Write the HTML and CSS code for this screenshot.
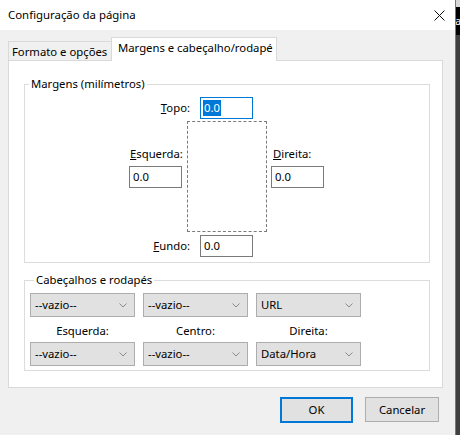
FILE: index.html
```html
<!DOCTYPE html>
<html lang="pt">
<head>
<meta charset="utf-8">
<title>Configuração da página</title>
<link rel="stylesheet" href="styles.css">
</head>
<body>
<div class="screen">
  <div class="dialog">
    <div class="titlebar">
      <span class="title">Configuração da página</span>
      <svg class="close" width="11" height="11" viewBox="0 0 11 11"><path d="M0.5 0.5 L10.5 10.5 M10.5 0.5 L0.5 10.5" stroke="#111" stroke-width="1" fill="none"/></svg>
    </div>
    <div class="tabs">
      <div class="tab">Formato e opções</div>
      <div class="tab active">Margens e cabeçalho/rodapé</div>
    </div>
    <div class="panel">
      <fieldset class="group margins">
        <legend>Margens (milímetros)</legend>
        <div class="vrow">
          <label class="vlabel"><u>T</u>opo:</label>
          <div class="field focus"><span class="sel">0.0</span></div>
        </div>
        <div class="midrow">
          <div class="side">
            <label class="slabel left"><u>E</u>squerda:</label>
            <div class="field">0.0</div>
          </div>
          <div class="page"></div>
          <div class="side">
            <label class="slabel right"><u>D</u>ireita:</label>
            <div class="field">0.0</div>
          </div>
        </div>
        <div class="vrow bottom">
          <label class="vlabel"><u>F</u>undo:</label>
          <div class="field">0.0</div>
        </div>
      </fieldset>
      <fieldset class="group headers">
        <legend>Cabeçalhos e rodapés</legend>
        <div class="combos">
          <div class="combo">--vazio--<svg class="chev" width="8" height="5" viewBox="0 0 8 5"><path d="M0.5 0.5 L4 4 L7.5 0.5" stroke="#8a8a8a" fill="none"/></svg></div>
          <div class="combo">--vazio--<svg class="chev" width="8" height="5" viewBox="0 0 8 5"><path d="M0.5 0.5 L4 4 L7.5 0.5" stroke="#8a8a8a" fill="none"/></svg></div>
          <div class="combo">URL<svg class="chev" width="8" height="5" viewBox="0 0 8 5"><path d="M0.5 0.5 L4 4 L7.5 0.5" stroke="#8a8a8a" fill="none"/></svg></div>
          <div class="clabel">Esquerda:</div>
          <div class="clabel">Centro:</div>
          <div class="clabel">Direita:</div>
          <div class="combo">--vazio--<svg class="chev" width="8" height="5" viewBox="0 0 8 5"><path d="M0.5 0.5 L4 4 L7.5 0.5" stroke="#8a8a8a" fill="none"/></svg></div>
          <div class="combo">--vazio--<svg class="chev" width="8" height="5" viewBox="0 0 8 5"><path d="M0.5 0.5 L4 4 L7.5 0.5" stroke="#8a8a8a" fill="none"/></svg></div>
          <div class="combo">Data/Hora<svg class="chev" width="8" height="5" viewBox="0 0 8 5"><path d="M0.5 0.5 L4 4 L7.5 0.5" stroke="#8a8a8a" fill="none"/></svg></div>
        </div>
      </fieldset>
    </div>
    <div class="buttons">
      <div class="btn default">OK</div>
      <div class="btn">Cancelar</div>
    </div>
  </div>
  <div class="edge">
    <div class="edge-top"></div>
    <div class="edge-bar">a</div>
    <div class="edge-rest"></div>
  </div>
</div>
</body>
</html>
```

FILE: styles.css
```css
html, body {
  margin: 0;
  padding: 0;
}
body {
  width: 460px;
  height: 435px;
  overflow: hidden;
  font-family: "Noto Sans", "Open Sans", sans-serif;
  font-size: 11.3px;
  color: #000;
  background: #f0f0f0;
}
.screen {
  display: flex;
  width: 460px;
  height: 435px;
}
.dialog {
  width: 455px;
  height: 435px;
  background: #f0f0f0;
  flex: none;
}
.titlebar {
  height: 30px;
  background: #fff;
  display: flex;
  align-items: center;
  justify-content: space-between;
  padding: 0 10px 0 8px;
  font-size: 11.4px;
}
.title {
  line-height: 16px;
}
.close {
  display: block;
}
.tabs {
  display: flex;
  align-items: flex-end;
  margin: 7px 0 0 8px;
  height: 23px;
}
.tab {
  height: 19px;
  line-height: 19px;
  padding: 0 0 0 3px;
  border: 1px solid #d9d9d9;
  border-bottom: none;
  border-right: none;
  background: #f0f0f0;
  box-sizing: border-box;
  width: 103px;
  white-space: nowrap;
  overflow: hidden;
}
.tab.active {
  height: 24px;
  line-height: 20px;
  width: 166px;
  border-right: 1px solid #d9d9d9;
  background: #fff;
  padding: 0 0 0 6px;
  margin-bottom: -1px;
  position: relative;
  z-index: 1;
}
.panel {
  margin-left: 8px;
  width: 435px;
  height: 328px;
  box-sizing: border-box;
  border: 1px solid #d9d9d9;
  background: #fff;
  padding: 15px 0 0 15px;
}
.group {
  margin: 0;
  width: 406px;
  box-sizing: border-box;
  border: 1px solid #dcdcdc;
  padding: 5px 0 5px 0;
}
.group legend {
  padding: 0 2px;
  margin-left: 4px;
  line-height: 16px;
}
.headers {
  margin-top: 9px;
  padding: 5px 0 4px 5px;
}
.vrow {
  display: flex;
  height: 22px;
  align-items: center;
}
.vrow.bottom {
  margin-top: 3px;
}
.vlabel {
  width: 165px;
  text-align: right;
  margin-right: 10px;
  line-height: 16px;
}
.field {
  width: 53px;
  height: 22px;
  box-sizing: border-box;
  border: 1px solid #7a7a7a;
  background: #fff;
  padding: 0 0 0 3px;
  line-height: 20px;
}
.field.focus {
  border-color: #0078d7;
  padding-left: 2px;
}
.sel {
  background: #0078d7;
  color: #fff;
  display: inline-block;
  line-height: 16px;
  padding: 0 1px;
}
.midrow {
  display: flex;
  margin-top: 2px;
  height: 111px;
  padding-left: 104px;
  gap: 4px;
}
.side {
  width: 54px;
  padding-top: 25px;
}
.slabel {
  display: block;
  line-height: 16px;
  margin-bottom: 4px;
}
.slabel.left {
  padding-left: 1px;
}
.slabel.right {
  padding-left: 2px;
}
.page {
  width: 80px;
  height: 111px;
  box-sizing: border-box;
  border: 1px dashed #7a7a7a;
}
.combos {
  display: grid;
  grid-template-columns: 105px 105px 105px;
  column-gap: 8px;
  grid-template-rows: 24px 25px 24px;
}
.combo {
  position: relative;
  box-sizing: border-box;
  height: 24px;
  border: 1px solid #adadad;
  background: #e1e1e1;
  line-height: 22px;
  padding-left: 4px;
}
.chev {
  position: absolute;
  right: 7px;
  top: 9px;
}
.clabel {
  text-align: center;
  line-height: 16px;
  padding-top: 6px;
}
.buttons {
  display: flex;
  justify-content: flex-end;
  gap: 12px;
  margin: 9px 16px 0 0;
  align-items: flex-start;
}
.btn {
  width: 74px;
  height: 25px;
  box-sizing: border-box;
  border: 1px solid #adadad;
  background: #e1e1e1;
  text-align: center;
  line-height: 23px;
}
.btn.default {
  width: 73px;
  height: 26px;
  border: 2px solid #0078d7;
  line-height: 22px;
}
.edge {
  width: 5px;
  height: 435px;
  box-sizing: border-box;
  border-left: 1px solid #2b8fd6;
  display: flex;
  flex-direction: column;
  flex: none;
}
.edge-top {
  height: 7px;
  background: #d8d8d8;
}
.edge-bar {
  height: 28px;
  background: #000;
  color: #fff;
  overflow: hidden;
  line-height: 28px;
  text-indent: -1px;
  font-size: 11px;
}
.edge-rest {
  flex: 1;
  background: #3f3f3f;
}
```
